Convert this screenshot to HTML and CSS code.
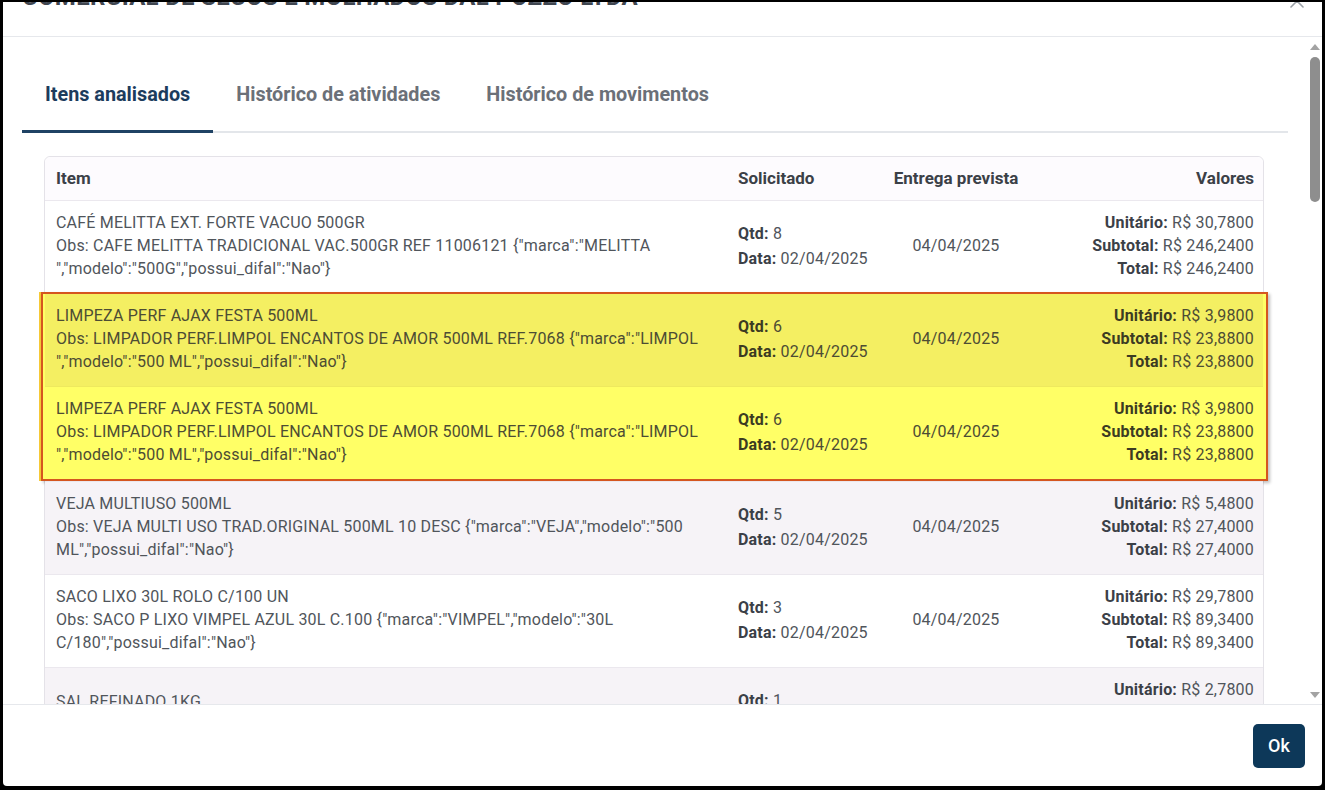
FILE: index.html
```html
<!DOCTYPE html>
<html lang="pt-BR">
<head>
    <meta charset="UTF-8">
    <meta name="viewport" content="width=device-width, initial-scale=1.0">
    <title>Itens analisados</title>
    <link rel="stylesheet" href="styles.css">
</head>
<body>
    <div class="modal">
        <div class="modal-header">
            <h2 class="modal-title">COMERCIAL DE SECOS E MOLHADOS DAL POZZO LTDA</h2>
            <button class="close" aria-label="Fechar">
                <svg width="16" height="16" viewBox="0 0 16 16"><path d="M2 2 L14 14 M14 2 L2 14" stroke="#9aa0a6" stroke-width="1.6" fill="none" stroke-linecap="round"/></svg>
            </button>
        </div>

        <div class="modal-body">
            <div class="body-content">
                <div class="tabs">
                    <div class="tab active">Itens analisados</div>
                    <div class="tab">Histórico de atividades</div>
                    <div class="tab">Histórico de movimentos</div>
                </div>

                <div class="items">
                    <div class="row head">
                        <div>Item</div>
                        <div>Solicitado</div>
                        <div class="center">Entrega prevista</div>
                        <div class="right">Valores</div>
                    </div>

                    <div class="row">
                        <div>CAFÉ MELITTA EXT. FORTE VACUO 500GR<br>Obs: CAFE MELITTA TRADICIONAL VAC.500GR REF 11006121 {"marca":"MELITTA ","modelo":"500G","possui_difal":"Nao"}</div>
                        <div class="req"><b>Qtd:</b> 8<br><b>Data:</b> 02/04/2025</div>
                        <div class="center">04/04/2025</div>
                        <div class="right"><b>Unitário:</b> R$ 30,7800<br><b>Subtotal:</b> R$ 246,2400<br><b>Total:</b> R$ 246,2400</div>
                    </div>

                    <div class="highlight">
                        <div class="row odd">
                            <div>LIMPEZA PERF AJAX FESTA 500ML<br>Obs: LIMPADOR PERF.LIMPOL ENCANTOS DE AMOR 500ML REF.7068 {"marca":"LIMPOL ","modelo":"500 ML","possui_difal":"Nao"}</div>
                            <div class="req"><b>Qtd:</b> 6<br><b>Data:</b> 02/04/2025</div>
                            <div class="center">04/04/2025</div>
                            <div class="right"><b>Unitário:</b> R$ 3,9800<br><b>Subtotal:</b> R$ 23,8800<br><b>Total:</b> R$ 23,8800</div>
                        </div>
                        <div class="row">
                            <div>LIMPEZA PERF AJAX FESTA 500ML<br>Obs: LIMPADOR PERF.LIMPOL ENCANTOS DE AMOR 500ML REF.7068 {"marca":"LIMPOL ","modelo":"500 ML","possui_difal":"Nao"}</div>
                            <div class="req"><b>Qtd:</b> 6<br><b>Data:</b> 02/04/2025</div>
                            <div class="center">04/04/2025</div>
                            <div class="right"><b>Unitário:</b> R$ 3,9800<br><b>Subtotal:</b> R$ 23,8800<br><b>Total:</b> R$ 23,8800</div>
                        </div>
                    </div>

                    <div class="row odd">
                        <div>VEJA MULTIUSO 500ML<br>Obs: VEJA MULTI USO TRAD.ORIGINAL 500ML 10 DESC {"marca":"VEJA","modelo":"500 ML","possui_difal":"Nao"}</div>
                        <div class="req"><b>Qtd:</b> 5<br><b>Data:</b> 02/04/2025</div>
                        <div class="center">04/04/2025</div>
                        <div class="right"><b>Unitário:</b> R$ 5,4800<br><b>Subtotal:</b> R$ 27,4000<br><b>Total:</b> R$ 27,4000</div>
                    </div>

                    <div class="row">
                        <div>SACO LIXO 30L ROLO C/100 UN<br>Obs: SACO P LIXO VIMPEL AZUL 30L C.100 {"marca":"VIMPEL","modelo":"30L C/180","possui_difal":"Nao"}</div>
                        <div class="req"><b>Qtd:</b> 3<br><b>Data:</b> 02/04/2025</div>
                        <div class="center">04/04/2025</div>
                        <div class="right"><b>Unitário:</b> R$ 29,7800<br><b>Subtotal:</b> R$ 89,3400<br><b>Total:</b> R$ 89,3400</div>
                    </div>

                    <div class="row odd">
                        <div>SAL REFINADO 1KG<br>Obs: SAL REFINADO IODADO 1KG</div>
                        <div class="req"><b>Qtd:</b> 1<br><b>Data:</b> 02/04/2025</div>
                        <div class="center">04/04/2025</div>
                        <div class="right"><b>Unitário:</b> R$ 2,7800<br><b>Subtotal:</b> R$ 2,7800<br><b>Total:</b> R$ 2,7800</div>
                    </div>
                </div>
            </div>

            <div class="scrollbar">
                <span class="arrow-up"></span>
                <span class="thumb"></span>
                <span class="arrow-down"></span>
            </div>
        </div>

        <div class="modal-footer">
            <button class="btn-ok">Ok</button>
        </div>
    </div>
</body>
</html>
```

FILE: styles.css
```css
html, body {
    margin: 0;
    height: 100%;
}
body {
    background-color: #000;
    padding: 2px 3px 4px 3px;
    box-sizing: border-box;
    overflow: hidden;
    font-family: Roboto, "Liberation Sans", sans-serif;
    color: #50555b;
}
.modal {
    height: 100%;
    background-color: #fff;
    display: flex;
    flex-direction: column;
    border-radius: 0 0 4px 4px;
    overflow: hidden;
}
.modal-header {
    height: 34px;
    flex-shrink: 0;
    display: flex;
    justify-content: space-between;
    align-items: flex-start;
    padding: 0 17px 0 19px;
    border-bottom: 1px solid #e6e8ec;
    overflow: hidden;
}
.modal-title {
    margin: -19px 0 0;
    font-size: 24px;
    line-height: 28px;
    font-weight: 700;
    color: #3f4650;
    letter-spacing: 0.3px;
}
.close {
    margin-top: -9px;
    padding: 0;
    border: none;
    background: none;
}
.modal-body {
    flex: 1;
    min-height: 0;
    display: flex;
    overflow: hidden;
}
.body-content {
    flex: 1;
    padding: 24px 19px 0;
    overflow: hidden;
}

/* tabs */
.tabs {
    display: flex;
    border-bottom: 2px solid #e3e6ea;
}
.tab {
    padding: 22px 23px 23px;
    font-size: 19.8px;
    line-height: 24px;
    font-weight: 700;
    color: #6b7078;
}
.tab.active {
    color: #1c3c5d;
    border-bottom: 3px solid #1f4264;
    margin-bottom: -2px;
}

/* items table */
.items {
    margin: 23px 24px 0 22px;
    border: 1px solid #e4e2e8;
    border-radius: 6px;
    font-size: 16px;
    letter-spacing: 0.2px;
    line-height: 23px;
}
.row {
    display: grid;
    grid-template-columns: 682px 154px 150px 1fr;
    align-items: center;
    border-top: 1px solid #ebe8ee;
}
.row > div {
    padding: 10px 4px 13px 11px;
}
.row.head {
    border-top: none;
    height: 43px;
    background-color: #fdfbfe;
    border-radius: 6px 6px 0 0;
    font-size: 17px;
    letter-spacing: 0;
    font-weight: 700;
    color: #3b4047;
}
.row.head > div {
    padding-top: 0;
    padding-bottom: 0;
}
.row.odd {
    background-color: #f6f3f7;
}
.row b {
    color: #3b4047;
}
.req {
    line-height: 25px;
}
.center {
    text-align: center;
}
.right {
    text-align: right;
}
.row > .center {
    padding-left: 0;
    padding-right: 0;
}
.row > .right {
    padding-right: 9px;
}

.highlight {
    margin: -1px -5px 0 -4px;
    padding: 0 3px 0 2px;
    border: 2px solid #d5561f;
    background-color: #ffff66;
    box-shadow: 2px 2px 3px rgba(0, 0, 0, 0.25), -2px 0 0 #f6c936;
    color: #4d4c34;
}
.highlight .row {
    border-top: none;
}
.highlight .row + .row {
    border-top: 1px solid #eee95e;
}
.highlight .row.odd {
    background-color: #f4ef62;
}
.highlight b {
    color: #3c3b22;
}

/* fake scrollbar */
.scrollbar {
    width: 15px;
    flex-shrink: 0;
    display: flex;
    flex-direction: column;
    align-items: center;
    padding: 7px 0 6px;
    box-sizing: border-box;
}
.arrow-up {
    border-left: 5px solid transparent;
    border-right: 5px solid transparent;
    border-bottom: 6px solid #a3a3a3;
}
.thumb {
    width: 10px;
    height: 145px;
    margin-top: 7px;
    border-radius: 5px;
    background-color: #8e8e8e;
}
.arrow-down {
    margin-top: auto;
    border-left: 5px solid transparent;
    border-right: 5px solid transparent;
    border-top: 6px solid #a3a3a3;
}

.modal-footer {
    height: 82px;
    flex-shrink: 0;
    box-sizing: border-box;
    border-top: 1px solid #e6e8ec;
    display: flex;
    justify-content: flex-end;
    align-items: center;
    padding: 0 17px 0 0;
}
.btn-ok {
    width: 52px;
    height: 44px;
    border: none;
    border-radius: 5px;
    background-color: #0d3859;
    color: #fff;
    font-family: Roboto, "Liberation Sans", sans-serif;
    font-size: 18px;
    font-weight: 500;
}
```
